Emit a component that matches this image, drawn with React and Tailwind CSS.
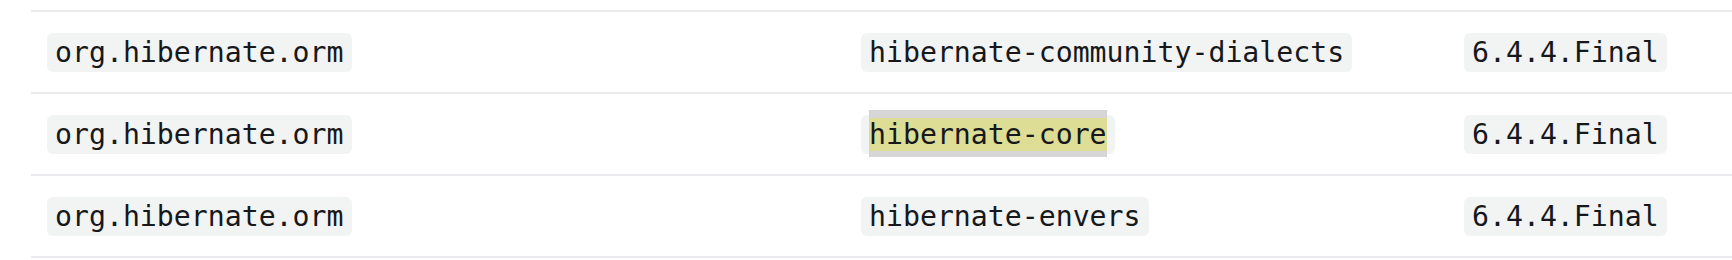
import React from 'react';

const rows = [
  { group: 'org.hibernate.orm', artifact: 'hibernate-community-dialects', version: '6.4.4.Final' },
  { group: 'org.hibernate.orm', artifact: 'hibernate-core', version: '6.4.4.Final', marked: true },
  { group: 'org.hibernate.orm', artifact: 'hibernate-envers', version: '6.4.4.Final' },
];

const Code = ({ children }) => (
  <code className="inline-block rounded-[6px] bg-[#f2f3f3] px-2 py-[3px] font-['DejaVu_Sans_Mono',monospace] text-[28.2px] leading-[33px] text-[#16181b] whitespace-nowrap">
    {children}
  </code>
);

const App = () => {
  return (
    <div className="h-[260px] w-full overflow-hidden bg-white">
      <div className="h-[10px]" />
      <div className="ml-[31px]">
        {rows.map((row, i) => (
          <div
            key={i}
            className="grid h-[82px] grid-cols-[814px_603px_1fr] items-center border-t-2 border-[#ebebef]"
          >
            <div className="px-4">
              <Code>{row.group}</Code>
            </div>
            <div className="px-4">
              <Code>
                {row.marked ? (
                  <mark className="bg-[#dddd96] text-[#16181b] shadow-[0_-8px_0_#d6d6d6,0_6px_0_#d6d6d6]">
                    {row.artifact}
                  </mark>
                ) : (
                  row.artifact
                )}
              </Code>
            </div>
            <div className="px-4">
              <Code>{row.version}</Code>
            </div>
          </div>
        ))}
        <div className="border-t-2 border-[#ebebef]" />
      </div>
    </div>
  );
};

export default App;
